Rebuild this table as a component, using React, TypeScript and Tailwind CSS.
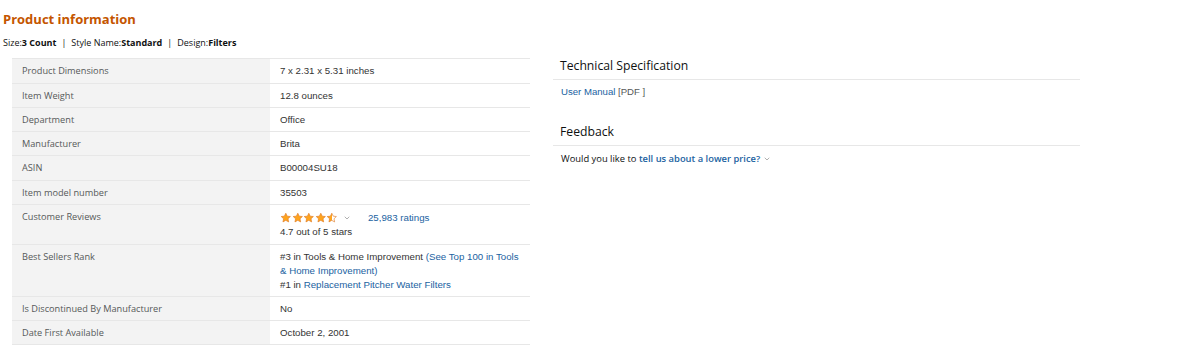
import { ChevronDown } from 'lucide-react';

type Row = { label: string; value: React.ReactNode; tall?: boolean };

const ember = "font-['Open_Sans',sans-serif]";
const arial = "font-['Liberation_Sans',Arial,sans-serif]";

const Star = ({ fill }: { fill: 'full' | 'half' }) => (
  <svg viewBox="0 0 24 24" className="h-[11.6px] w-[11.6px]">
    <defs>
      <linearGradient id="half-star">
        <stop offset="50%" stopColor="#ffa41c" />
        <stop offset="50%" stopColor="#ffffff" />
      </linearGradient>
    </defs>
    <path
      d="M12 2.5l2.9 6.1 6.6.8-4.9 4.6 1.3 6.6L12 17.3l-5.9 3.3 1.3-6.6-4.9-4.6 6.6-.8z"
      fill={fill === 'full' ? '#ffa41c' : 'url(#half-star)'}
      stroke="#de7921"
      strokeWidth="1.3"
      strokeLinejoin="round"
    />
  </svg>
);

const Link = ({ children }: { children: React.ReactNode }) => (
  <span className="text-[#2162a1]">{children}</span>
);

const rows: Row[] = [
  { label: 'Product Dimensions', value: '7 x 2.31 x 5.31 inches', tall: true },
  { label: 'Item Weight', value: '12.8 ounces' },
  { label: 'Department', value: 'Office' },
  { label: 'Manufacturer', value: 'Brita' },
  { label: 'ASIN', value: 'B00004SU18', tall: true },
  { label: 'Item model number', value: '35503' },
  {
    label: 'Customer Reviews',
    tall: true,
    value: (
      <div>
        <div className="flex h-[15px] items-center">
          <div className="flex">
            <Star fill="full" />
            <Star fill="full" />
            <Star fill="full" />
            <Star fill="full" />
            <Star fill="half" />
          </div>
          <ChevronDown className="ml-[5px] h-[8px] w-[8px] text-[#888]" strokeWidth={2} />
          <span className="ml-[17px]">
            <Link>25,983 ratings</Link>
          </span>
        </div>
        <div>4.7 out of 5 stars</div>
      </div>
    ),
  },
  {
    label: 'Best Sellers Rank',
    value: (
      <div>
        <div>
          #3 in Tools &amp; Home Improvement <Link>(See Top 100 in Tools &amp; Home Improvement)</Link>
        </div>
        <div>
          #1 in <Link>Replacement Pitcher Water Filters</Link>
        </div>
      </div>
    ),
  },
  { label: 'Is Discontinued By Manufacturer', value: 'No' },
  { label: 'Date First Available', value: 'October 2, 2001' },
];

export default function App() {
  return (
    <div className="min-h-[353px] bg-white px-[3px] pt-[9px]">
      <h2 className={`${ember} text-[13px] font-bold leading-[20px] text-[#c45500]`}>
        Product information
      </h2>
      <div className={`${ember} mt-[7px] text-[9px] leading-[14px] text-[#0f1111]`}>
        Size:<b>3 Count</b>
        <span className="mx-[5px]">|</span>
        Style Name:<b>Standard</b>
        <span className="mx-[5px]">|</span>
        Design:<b>Filters</b>
      </div>

      <div className="mt-[8px] flex items-start gap-[23px] pl-[9px]">
        <table className="w-[518px] border-collapse">
          <tbody>
            {rows.map((r) => (
              <tr key={r.label} className="border-y border-[#e7e7e7]">
                <td
                  className={`${ember} w-[258px] bg-[#f3f3f3] px-[10px] pt-[5px] align-top text-[9.2px] leading-[14px] text-[#565959] ${r.tall ? 'pb-[5px]' : 'pb-[4px]'}`}
                >
                  {r.label}
                </td>
                <td
                  className={`${arial} pl-[10px] pr-[6px] pt-[5px] align-top text-[9.7px] leading-[14px] text-[#333] ${r.tall ? 'pb-[5px]' : 'pb-[4px]'}`}
                >
                  {r.value}
                </td>
              </tr>
            ))}
          </tbody>
        </table>

        <div className="w-[527px]">
          <h3
            className={`${ember} border-b border-[#e7e7e7] px-[7px] pb-[5px] text-[12.2px] leading-[16px] text-[#0f1111]`}
          >
            Technical Specification
          </h3>
          <div className={`${arial} px-[8px] pt-[5px] text-[9.6px] leading-[14px] text-[#565959]`}>
            <Link>User Manual</Link> [PDF ]
          </div>

          <h3
            className={`${ember} mt-[25px] border-b border-[#e7e7e7] px-[7px] pb-[5px] text-[12.2px] leading-[16px] text-[#0f1111]`}
          >
            Feedback
          </h3>
          <div className={`${ember} flex items-center px-[8px] pt-[6px] text-[9.4px] leading-[14px] text-[#0f1111]`}>
            Would you like to&nbsp;
            <span className="font-semibold text-[#2162a1]">tell us about a lower price?</span>
            <ChevronDown className="ml-[3px] h-[8px] w-[8px] text-[#888]" strokeWidth={2} />
          </div>
        </div>
      </div>
    </div>
  );
}
